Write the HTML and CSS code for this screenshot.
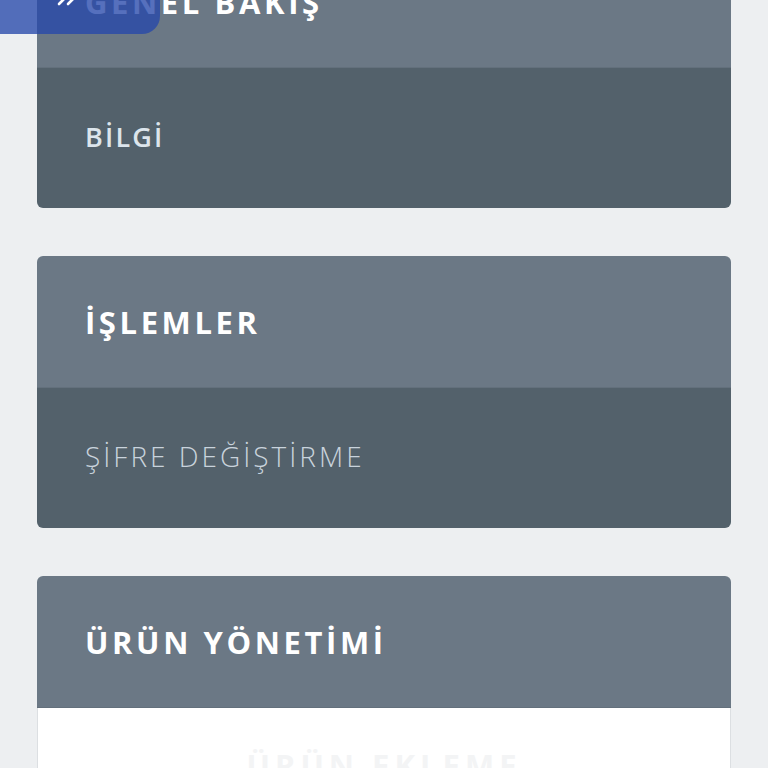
FILE: index.html
```html
<!DOCTYPE html>
<html lang="tr">
<head>
  <meta charset="UTF-8" />
  <meta name="viewport" content="width=device-width, initial-scale=1.0" />
  <title>Panel</title>
  <link rel="stylesheet" href="styles.css">
</head>
<body>

  <!-- Menü açma düğmesi -->
  <button class="menu-toggle" type="button" aria-label="Menü">
    <svg width="26" height="26" viewBox="0 0 26 26" fill="none" stroke="#fff" stroke-width="2.6" stroke-linecap="round" stroke-linejoin="round">
      <polyline points="3,4 12,13 3,22"></polyline>
      <polyline points="12,4 21,13 12,22"></polyline>
    </svg>
  </button>

  <div class="page">

    <div class="panel">
      <div class="panel-head">GENEL BAKIŞ</div>
      <div class="panel-body">
        <a class="link link-bold" href="#">BİLGİ</a>
      </div>
    </div>

    <div class="panel">
      <div class="panel-head">İŞLEMLER</div>
      <div class="panel-body">
        <a class="link" href="#">ŞİFRE DEĞİŞTİRME</a>
      </div>
    </div>

    <div class="panel">
      <div class="panel-head">ÜRÜN YÖNETİMİ</div>
      <div class="panel-body panel-light">
        <a class="link link-faint" href="#">ÜRÜN EKLEME</a>
      </div>
    </div>

  </div>

</body>
</html>
```

FILE: styles.css
```css
body {
  margin: 0;
  background-color: #edeff1;
  font-family: 'Open Sans', 'Noto Sans', sans-serif;
  overflow: hidden;
}

/* Sayfa kaydırılmış halde: ilk kartın başlığı yarıya kadar yukarıda */
.page {
  margin-top: -64px;
  padding: 0 37px;
  display: flex;
  flex-direction: column;
  gap: 48px;
}

.panel {
  border-radius: 6px;
  overflow: hidden;
}

.panel-head {
  height: 132px;
  display: flex;
  align-items: center;
  padding: 0 48px;
  background: #6b7885;
  color: #fff;
  font-size: 31px;
  font-weight: 700;
  letter-spacing: 3.6px;
  border-bottom: 1px solid #63707c;
  box-sizing: border-box;
}

.panel-body {
  height: 140px;
  display: flex;
  align-items: center;
  padding: 0 48px;
  background: #53616b;
}

.panel-light {
  background: #fff;
  border: 1px solid #dcdfe2;
  border-top: 0;
  justify-content: center;
  align-items: flex-end;
  height: 200px;
}

.link {
  color: #c9d3dc;
  text-decoration: none;
  font-size: 28px;
  font-weight: 300;
  letter-spacing: 3px;
  margin-top: -4px;
}

.link-bold {
  color: #dce5ec;
  font-weight: 600;
  font-size: 27px;
  letter-spacing: 2.2px;
}

.link-faint {
  color: #f3f4f5;
  font-weight: 700;
  font-size: 31px;
  letter-spacing: 5px;
  margin-bottom: 122px;
}

/* Sol üstteki yarı saydam menü düğmesi */
.menu-toggle {
  position: fixed;
  top: 0;
  left: 0;
  width: 160px;
  height: 34px;
  padding: 0 0 0 56px;
  border: 0;
  border-bottom-right-radius: 18px;
  background: rgba(38, 72, 170, 0.78);
  display: flex;
  align-items: flex-end;
  cursor: pointer;
  z-index: 10;
}

.menu-toggle svg {
  margin-bottom: 26px;
}
```
